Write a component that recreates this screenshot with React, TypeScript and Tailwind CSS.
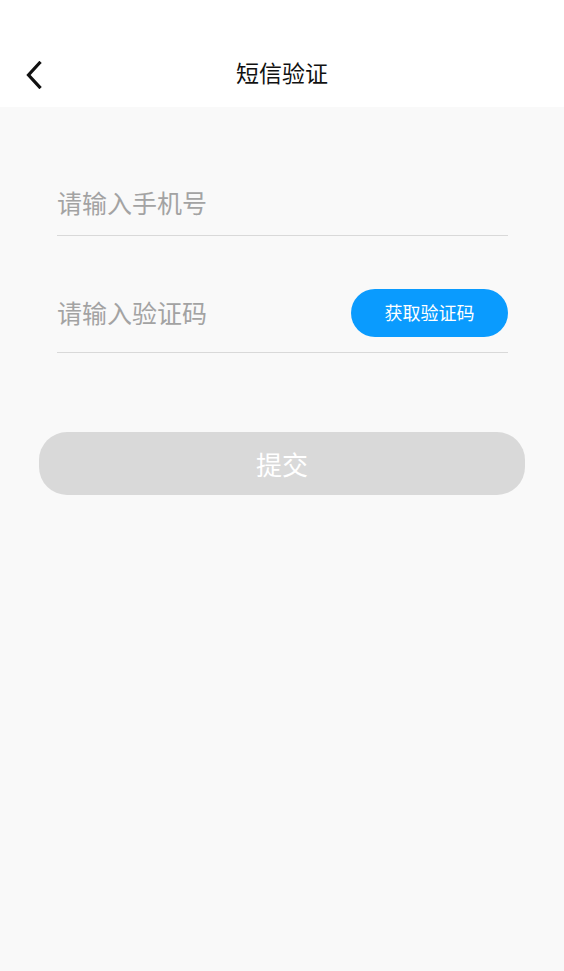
import { useState } from 'react';

const font = { fontFamily: '"Noto Sans CJK SC", "Noto Sans", sans-serif' };

const BackIcon = () => (
  <svg width="18" height="28" viewBox="0 0 18 28" fill="none">
    <path d="M14.5 2 L3.5 14 L14.5 26" stroke="#111" strokeWidth="3.2" strokeLinecap="square" />
  </svg>
);

export default function App() {
  const [phone, setPhone] = useState('');
  const [code, setCode] = useState('');

  return (
    <div className="min-h-[971px] w-full bg-[#f9f9f9] flex flex-col" style={font}>
      {/* header */}
      <header className="bg-white h-[107px] shrink-0 flex items-end pb-[3px]">
        <div className="relative w-full h-[64px] flex items-center justify-center">
          <button className="absolute left-[25px] top-[21px]">
            <BackIcon />
          </button>
          <span className="text-[23px] text-[#111]">短信验证</span>
        </div>
      </header>

      {/* form */}
      <div className="px-[57px] pr-[56px] mt-[65px] flex flex-col">
        <div className="h-[64px] flex items-center border-b border-[#d9d9d9]">
          <input
            value={phone}
            onChange={(e) => setPhone(e.target.value)}
            placeholder="请输入手机号"
            className="w-full bg-transparent outline-none text-[25px] text-[#333] placeholder:text-[#a3a3a3] pb-[1px]"
          />
        </div>
        <div className="h-[80px] mt-[37px] flex items-center gap-3 border-b border-[#d9d9d9]">
          <input
            value={code}
            onChange={(e) => setCode(e.target.value)}
            placeholder="请输入验证码"
            className="flex-1 min-w-0 bg-transparent outline-none text-[25px] text-[#333] placeholder:text-[#a3a3a3]"
          />
          <button className="w-[157px] h-[48px] rounded-full bg-[#0a9bfe] text-white text-[18px] shrink-0">
            获取验证码
          </button>
        </div>
      </div>

      <div className="px-[39px] mt-[79px]">
        <button className="w-full h-[63px] rounded-[28px] bg-[#d9d9d9] text-white text-[26px]">
          提交
        </button>
      </div>
    </div>
  );
}
